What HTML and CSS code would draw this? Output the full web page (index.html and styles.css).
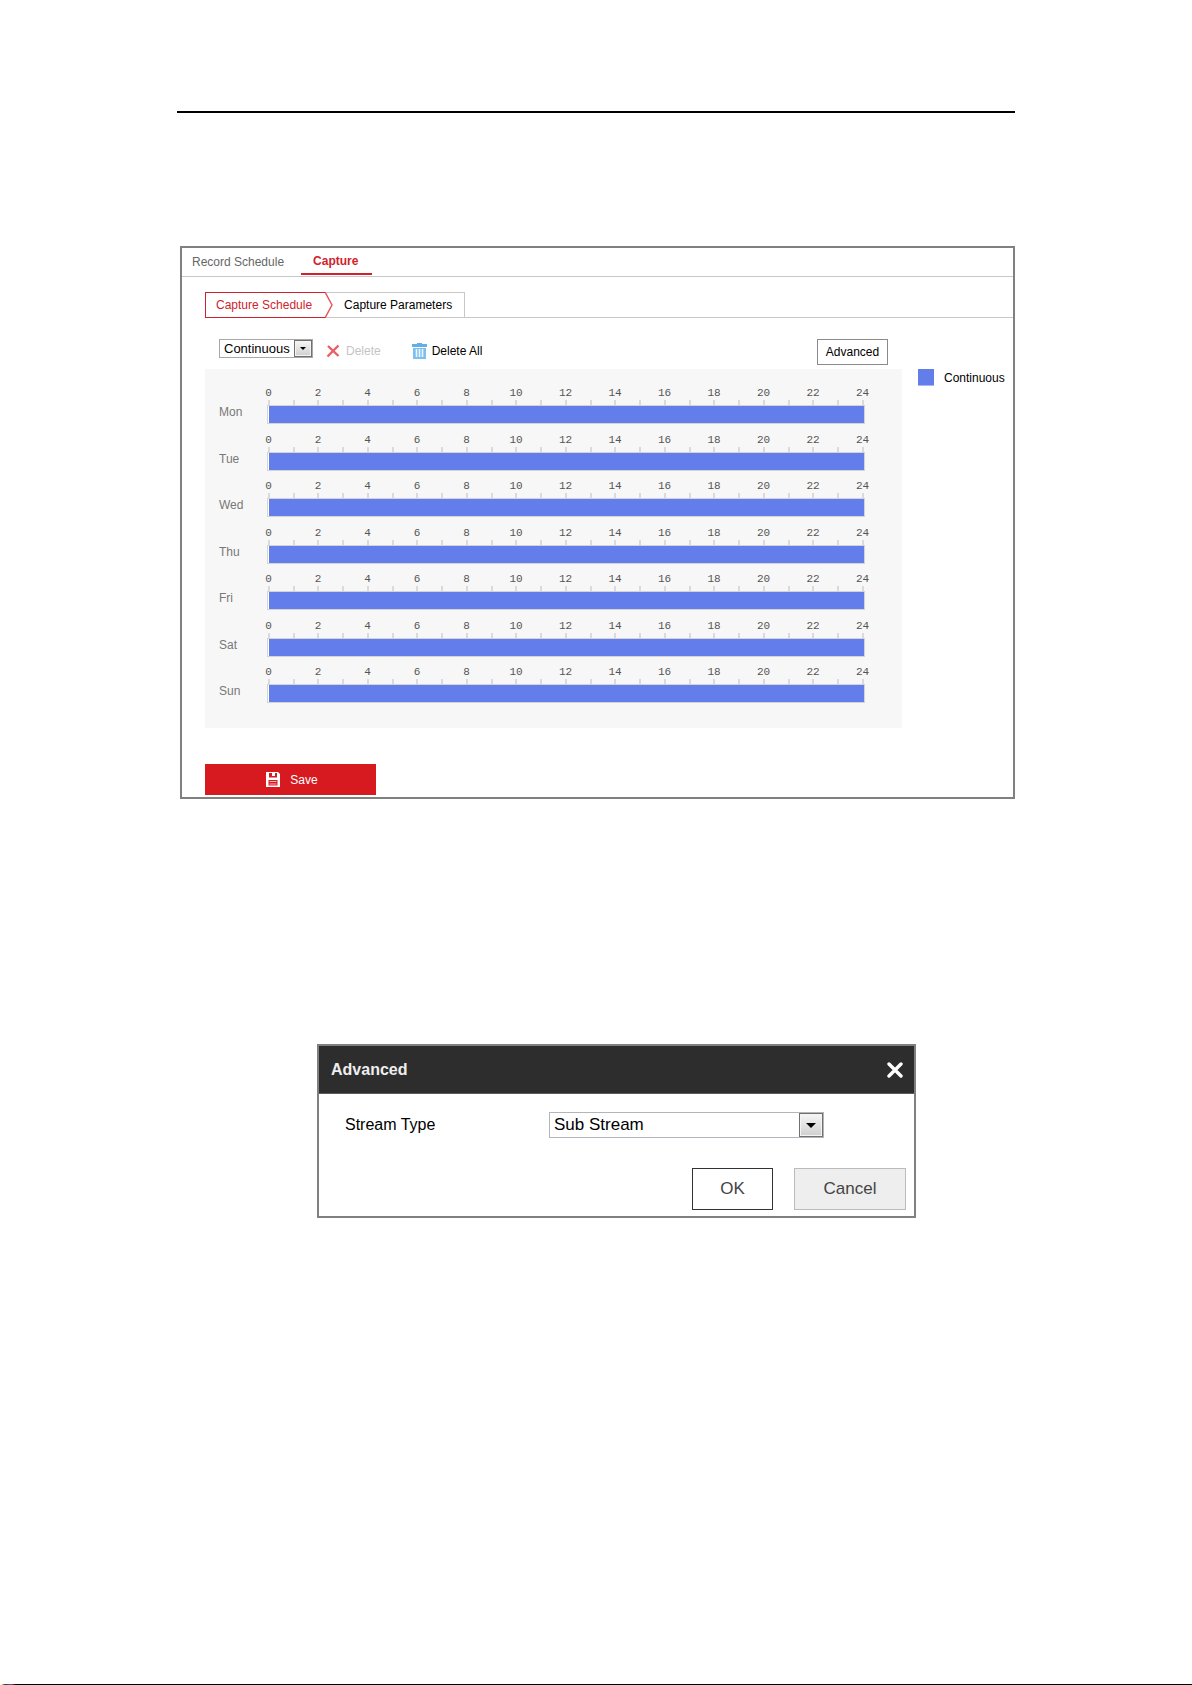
FILE: index.html
```html
<!DOCTYPE html>
<html lang="en">
<head>
<meta charset="utf-8">
<meta name="viewport" content="width=device-width, initial-scale=1">
<title>Capture Schedule</title>
<link rel="stylesheet" href="styles.css">
</head>
<body>
<main class="page">
  <hr class="page-rule">

  <section class="panel" aria-label="Capture settings">
    <nav class="tabs" aria-label="Storage">
      <a class="tab" href="#record">Record Schedule</a>
      <a class="tab tab-active" href="#capture" aria-current="page">Capture</a>
    </nav>

    <div class="panel-body">
      <nav class="steps" aria-label="Capture">
        <a class="step step-active" href="#schedule" aria-current="page">Capture Schedule</a>
        <a class="step step-next" href="#parameters">
          <svg class="chevron" width="8" height="26" viewBox="0 0 8 26" aria-hidden="true"><path d="M0 0 7 13 0 26" fill="#fff" stroke="#e0555a" stroke-width="1.4"/></svg>
          Capture Parameters
        </a>
      </nav>

      <div class="layout">
        <div class="toolbar">
          <span class="select select-small">
            <select aria-label="Capture type"><option>Continuous</option></select>
            <span class="select-arrow" aria-hidden="true"></span>
          </span>
          <button class="tool tool-delete" type="button" disabled>
            <svg width="14" height="14" viewBox="0 0 14 14" aria-hidden="true"><path d="M2 2 12.500 12M12.500 1.500 1.500 12.500" fill="none" stroke="#ea5f62" stroke-width="2.400"/></svg>
            Delete
          </button>
          <button class="tool" type="button">
            <svg width="15" height="16" viewBox="0 0 15 16" aria-hidden="true"><path d="M5 0h5v1h5v3H0V1h5z" fill="#62b0e6"/><path d="M1 5h13v11H1z" fill="#7cc0ee"/><path d="M4.500 6v8M7.500 6v8M10.500 6v8" stroke="#e9f6fe" stroke-width="1.600"/></svg>
            Delete All
          </button>
          <button class="advanced" type="button">Advanced</button>
        </div>

        <div class="schedule">
          <div class="day"><span class="day-name">Mon</span><div class="timeline"><ol class="hours"><li>0</li><li>2</li><li>4</li><li>6</li><li>8</li><li>10</li><li>12</li><li>14</li><li>16</li><li>18</li><li>20</li><li>22</li><li>24</li></ol><div class="ticks"></div><div class="bar"></div></div></div>
          <div class="day"><span class="day-name">Tue</span><div class="timeline"><ol class="hours"><li>0</li><li>2</li><li>4</li><li>6</li><li>8</li><li>10</li><li>12</li><li>14</li><li>16</li><li>18</li><li>20</li><li>22</li><li>24</li></ol><div class="ticks"></div><div class="bar"></div></div></div>
          <div class="day"><span class="day-name">Wed</span><div class="timeline"><ol class="hours"><li>0</li><li>2</li><li>4</li><li>6</li><li>8</li><li>10</li><li>12</li><li>14</li><li>16</li><li>18</li><li>20</li><li>22</li><li>24</li></ol><div class="ticks"></div><div class="bar"></div></div></div>
          <div class="day"><span class="day-name">Thu</span><div class="timeline"><ol class="hours"><li>0</li><li>2</li><li>4</li><li>6</li><li>8</li><li>10</li><li>12</li><li>14</li><li>16</li><li>18</li><li>20</li><li>22</li><li>24</li></ol><div class="ticks"></div><div class="bar"></div></div></div>
          <div class="day"><span class="day-name">Fri</span><div class="timeline"><ol class="hours"><li>0</li><li>2</li><li>4</li><li>6</li><li>8</li><li>10</li><li>12</li><li>14</li><li>16</li><li>18</li><li>20</li><li>22</li><li>24</li></ol><div class="ticks"></div><div class="bar"></div></div></div>
          <div class="day"><span class="day-name">Sat</span><div class="timeline"><ol class="hours"><li>0</li><li>2</li><li>4</li><li>6</li><li>8</li><li>10</li><li>12</li><li>14</li><li>16</li><li>18</li><li>20</li><li>22</li><li>24</li></ol><div class="ticks"></div><div class="bar"></div></div></div>
          <div class="day"><span class="day-name">Sun</span><div class="timeline"><ol class="hours"><li>0</li><li>2</li><li>4</li><li>6</li><li>8</li><li>10</li><li>12</li><li>14</li><li>16</li><li>18</li><li>20</li><li>22</li><li>24</li></ol><div class="ticks"></div><div class="bar"></div></div></div>
        </div>

        <div class="legend"><span class="swatch"></span>Continuous</div>
      </div>

      <button class="save" type="button">
        <svg width="14" height="15" viewBox="0 0 14 15" aria-hidden="true"><path fill="#fff" fill-rule="evenodd" d="M0 0h12l2 2v13H0zM3 1v4.500h8V1H9v3H6V1zM2.500 8v5.500h9V8z"/><path d="M3.500 9.500h7M3.500 12h7" stroke="#f3b4b6"/></svg>
        Save
      </button>
    </div>
  </section>

  <section class="dialog" role="dialog" aria-labelledby="dialog-title">
    <header class="dialog-head">
      <h2 class="dialog-title" id="dialog-title">Advanced</h2>
      <button class="close" type="button" aria-label="Close">
        <svg width="16" height="16" viewBox="0 0 16 16" aria-hidden="true"><path d="M2 2 14 14M14 2 2 14" fill="none" stroke="#fff" stroke-width="3.400" stroke-linecap="round"/></svg>
      </button>
    </header>
    <div class="field">
      <label class="field-label" for="stream">Stream Type</label>
      <span class="select select-large">
        <select id="stream"><option>Sub Stream</option></select>
        <span class="select-arrow" aria-hidden="true"></span>
      </span>
    </div>
    <div class="actions">
      <button class="ok" type="button">OK</button>
      <button class="cancel" type="button">Cancel</button>
    </div>
  </section>
</main>
<footer class="page-end"></footer>
</body>
</html>
```

FILE: styles.css
```css
* {
  box-sizing: border-box;
}

body {
  margin: 0;
  min-height: 100vh;
  display: flex;
  flex-direction: column;
  background: #fff;
  color: #000;
  font: 12px/16px "Liberation Sans", Arial, sans-serif;
}

button,
select {
  font: inherit;
  color: inherit;
  margin: 0;
  padding: 0;
  border: 0;
  border-radius: 0;
  background: none;
}

a {
  color: inherit;
  text-decoration: none;
}

.page {
  flex: 1;
  padding: 111px 177px 40px;
}

.page-rule {
  height: 2px;
  margin: 0;
  border: 0;
  background: #000;
}

.panel {
  margin: 133px 0 0 3px;
  border: 2px solid #808080;
}

/* Top tabs */
.tabs {
  display: flex;
  gap: 17px;
  height: 29px;
  padding-left: 10px;
  border-bottom: 1px solid #c8c8c8;
}

.tab {
  padding-top: 6px;
  color: #666;
  white-space: nowrap;
}

.tab-active {
  height: 27px;
  padding: 5px 14px 0 12px;
  border-bottom: 2px solid #d0222d;
  color: #d0222d;
  font-weight: bold;
}

.panel-body {
  padding: 15px 0 2px 23px;
}

/* Second-level tabs */
.steps {
  display: flex;
  height: 26px;
  border-bottom: 1px solid #c8c8c8;
}

.step {
  height: 26px;
  display: flex;
  align-items: center;
  border: 1px solid #c8c8c8;
  border-left: 0;
  white-space: nowrap;
}

.step-active {
  padding: 0 13px 0 10px;
  border: 1px solid #d0222d;
  border-right: 0;
  color: #d0222d;
}

.step-next {
  gap: 11px;
  padding-right: 12px;
}

.chevron {
  flex: none;
}

/* Schedule area */
.layout {
  display: grid;
  grid-template-columns: minmax(0, 1fr) 95px;
  column-gap: 16px;
}

.toolbar {
  grid-column: 1;
  display: flex;
  align-items: flex-start;
  padding: 21px 14px 4px;
}

.select {
  position: relative;
  display: flex;
  border: 1px solid #a8a8a8;
  background: #fff;
}

.select select {
  appearance: none;
  flex: 1;
  min-width: 0;
  outline: 0;
}

.select-arrow {
  position: absolute;
  top: 0;
  right: 0;
  bottom: 0;
  display: grid;
  place-items: center;
  border: 1px solid #707070;
  background: linear-gradient(#f6f6f6, #cfcfcf);
  box-shadow: inset 0 0 0 1px #f4f4f4;
  pointer-events: none;
}

.select-arrow::after {
  content: "";
  border: solid transparent;
  border-width: 3px 3px 0;
  border-top-color: #000;
}

.select-small {
  width: 94px;
  height: 19px;
  font-size: 13px;
}

.select-small select {
  padding-left: 4px;
}

.select-small .select-arrow {
  width: 18px;
}

.tool {
  display: flex;
  align-items: center;
  gap: 5px;
  height: 24px;
  margin-left: 31px;
  white-space: nowrap;
}

.tool-delete {
  gap: 6px;
  margin-left: 13px;
  color: #c4c4c4;
}

.advanced {
  width: 71px;
  height: 26px;
  margin-left: auto;
  border: 1px solid #8a8a8a;
  background: #fff;
}

.schedule {
  grid-column: 1;
  min-height: 359px;
  display: grid;
  grid-template-rows: repeat(7, 1fr);
  padding: 18px 37px 15px 14px;
  background: #f7f7f7;
}

.day {
  display: flex;
}

.day-name {
  width: 48px;
  padding-top: 17px;
  color: #777;
}

.timeline {
  flex: 1;
}

.hours {
  display: flex;
  justify-content: space-between;
  margin: 0 2px 0 1px;
  padding: 0;
  list-style: none;
  color: #555;
  font: 11px/13px "Liberation Mono", monospace;
}

.hours li {
  width: 1px;
  display: flex;
  justify-content: center;
}

.ticks {
  height: 5px;
  margin: 0 1px;
  background: repeating-linear-gradient(to right, #dadada 0 2px, transparent 2px calc((100% - 2px) / 24));
}

.bar {
  height: 19px;
  border: 1px solid #d4d4d4;
  box-shadow: inset 1px 0 #fff;
  background: #637deb;
}

.legend {
  grid-column: 2;
  display: flex;
  align-items: flex-start;
  gap: 10px;
  line-height: 19px;
}

.swatch {
  width: 16px;
  height: 17px;
  border-bottom: 1px solid #a9b6f5;
  background: #637deb;
}

.save {
  display: flex;
  align-items: center;
  justify-content: center;
  gap: 10px;
  width: 171px;
  height: 31px;
  margin-top: 36px;
  padding-left: 3px;
  background: #d71920;
  color: #fff;
}

/* Dialog */
.dialog {
  max-width: 599px;
  margin: 245px 0 0 140px;
  border: 2px solid #808080;
  font-size: 16px;
}

.dialog-head {
  display: flex;
  align-items: center;
  justify-content: space-between;
  height: 48px;
  padding: 0 11px 0 12px;
  border-bottom: 1px solid #5c5c5c;
  background: #2d2d2d;
  color: #eee;
}

.dialog-title {
  margin: 0;
  font-size: 16px;
}

.close {
  display: flex;
}

.field {
  display: flex;
  align-items: center;
  padding: 18px 90px 0 26px;
}

.field-label {
  width: 204px;
}

.select-large {
  flex: 1;
  height: 26px;
  border-color: #b4b4bc;
  font-size: 17px;
}

.select-large select {
  padding-left: 4px;
}

.select-large .select-arrow {
  width: 24px;
}

.select-large .select-arrow::after {
  border-width: 5px 5px 0;
}

.actions {
  display: flex;
  justify-content: flex-end;
  gap: 21px;
  padding: 30px 8px 6px 0;
  color: #444;
  font-size: 17px;
}

.ok,
.cancel {
  height: 42px;
}

.ok {
  width: 81px;
  border: 1px solid #333;
}

.cancel {
  width: 112px;
  border: 1px solid #bbb;
  background: #eee;
}

.page-end {
  height: 1px;
  margin-left: 2px;
  background: linear-gradient(to right, #e6d800, #333 3px, #1c6fa8 7px, #a33 10px, #000 14px);
}
```
